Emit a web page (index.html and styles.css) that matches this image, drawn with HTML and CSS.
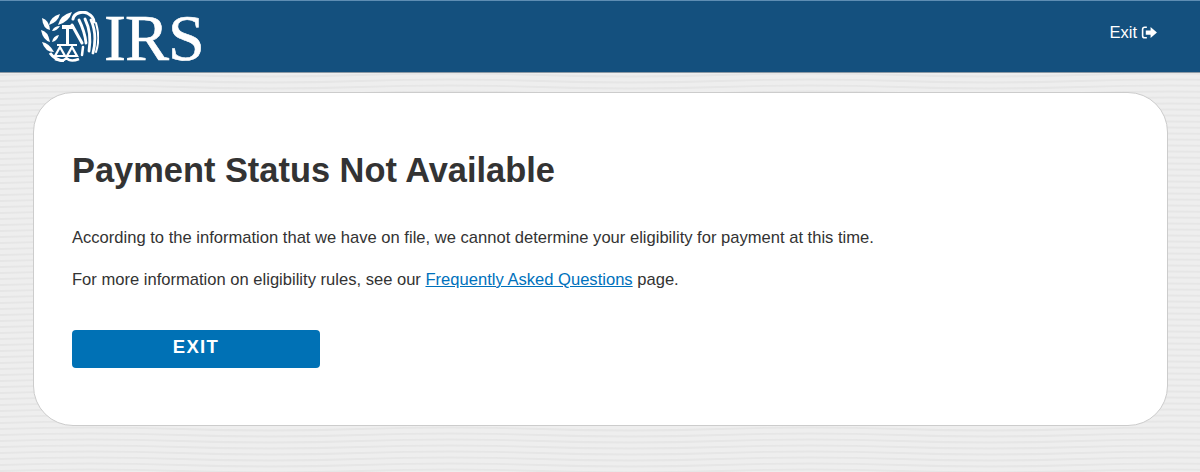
FILE: index.html
```html
<!DOCTYPE html>
<html lang="en">
<head>
  <meta charset="UTF-8" />
  <meta name="viewport" content="width=device-width, initial-scale=1.0" />
  <title>Payment Status Not Available</title>
  <link rel="stylesheet" href="styles.css">
</head>
<body>
  <header class="topbar">
    <a class="logo" href="#">
      <svg class="seal" viewBox="0 0 58 51" aria-hidden="true">
        <!-- laurel -->
        <g fill="#fff">
          <path d="M17 14Q19 4 31 1Q28 11 17 14Z"/>
          <path d="M8 14Q9 6 19 3Q17 11 8 14Z"/>
          <path d="M1 7Q8 9 9 19Q2 18 1 7Z"/>
          <path d="M11 20Q16 20 19 15Q13 15 11 20Z"/>
          <path d="M0 19Q7 20 9 31Q2 29 0 19Z"/>
          <path d="M11 31Q16 30 18 24Q12 25 11 31Z"/>
          <path d="M1 31Q8 32 13 41Q4 41 1 31Z"/>
        </g>
        <path d="M9 42Q14 49 23 50" fill="none" stroke="#fff" stroke-width="3"/>
        <!-- scales -->
        <g fill="none" stroke="#fff">
          <path d="M21 16H33" stroke-width="4"/>
          <path d="M26.500 18V35" stroke-width="3"/>
          <path d="M19 36L14 45H24Z" stroke-width="2.200"/>
          <path d="M31 36L26 45H36Z" stroke-width="2.200"/>
          <path d="M14 48C19 50 23 50 25.500 47C28 50 33 50 38 48" stroke-width="2.500"/>
          <path d="M16 34H36" stroke-width="2"/>
        </g>
        <!-- eagle -->
        <g fill="none" stroke="#fff" stroke-linecap="round">
          <path d="M32 8C33 2 41 0 46 2C50 4 53 7 53 11" stroke-width="3"/>
          <path d="M31 14L41 32" stroke-width="3"/>
          <path d="M38 9C41 15 44 22 45 32" stroke-width="2.800"/>
          <path d="M44 8C48 16 50 28 48 40" stroke-width="2.800"/>
          <path d="M50 9C54 18 55 30 52 42" stroke-width="2.800"/>
          <path d="M55 12C58 22 58 32 55 41" stroke-width="2"/>
          <path d="M42 36L41 44" stroke-width="2.500"/>
        </g>
      </svg>
      <span class="wordmark">IRS</span>
    </a>
    <a class="exit-link" href="#">Exit
      <svg viewBox="0 0 16 14" width="17" height="15" aria-hidden="true">
        <path d="M5.500 2H3.500C2.400 2 1.500 2.900 1.500 4V10C1.500 11.100 2.400 12 3.500 12H5.500" fill="none" stroke="#fff" stroke-width="1.500"/>
        <path d="M4.500 5H9V1.800L15 7L9 12.200V9H4.500Z" fill="#fff"/>
      </svg>
    </a>
  </header>

  <main class="card">
    <h1>Payment Status Not Available</h1>
    <p>According to the information that we have on file, we cannot determine your eligibility for payment at this time.</p>
    <p>For more information on eligibility rules, see our <a href="#">Frequently Asked Questions</a> page.</p>
    <button class="exit-btn">EXIT</button>
  </main>
</body>
</html>
```

FILE: styles.css
```css
html, body {
  height: 100%;
}
body {
  margin: 0;
  font-family: "Liberation Sans", Arial, sans-serif;
  color: #333;
  overflow: hidden;
  background-color: #eeeeee;
  background-image: url("data:image/svg+xml,%3Csvg xmlns='http://www.w3.org/2000/svg' width='360' height='6'%3E%3Cpath d='M0 3C60 1 120 1 180 3S300 5 360 3' fill='none' stroke='%23e6e6e6' stroke-width='2'/%3E%3C/svg%3E");
}
.topbar {
  height: 71px;
  background: #14507e;
  border-top: 1px solid #5e8db3;
  border-bottom: 1px solid #8d9aa5;
  display: flex;
  justify-content: space-between;
  align-items: center;
  padding: 0 42px 0 41px;
}
.logo {
  display: flex;
  align-items: center;
  gap: 5px;
  color: #fff;
  text-decoration: none;
}
.wordmark {
  font-family: "Liberation Serif", "Times New Roman", serif;
  font-size: 66px;
  line-height: 66px;
  letter-spacing: -1px;
  padding-right: 1px;
  margin-top: 2px;
  -webkit-text-stroke: 0.6px #fff;
}
.seal {
  width: 58px;
  height: 51px;
}
.exit-link {
  display: flex;
  align-items: center;
  gap: 4px;
  color: #fff;
  font-size: 16.500px;
  text-decoration: none;
  margin-bottom: 8px;
}
.card {
  margin: 19px 32px 0 33px;
  padding: 57px 38px 0 38px;
  height: 275px;
  background: #fff;
  border: 1px solid #ccc;
  border-radius: 40px;
}
.card h1 {
  margin: 0 0 39px;
  font-size: 34.400px;
  line-height: 40px;
  font-weight: bold;
  color: #333;
}
.card p {
  margin: 0 0 24px;
  font-size: 16.570px;
  line-height: 18px;
}
.card a {
  color: #0071bc;
}
.exit-btn {
  display: block;
  width: 248px;
  height: 38px;
  margin-top: 41px;
  padding: 0 0 4px;
  background: #0071b5;
  color: #fff;
  border: none;
  border-radius: 4px;
  font-family: inherit;
  font-size: 18.500px;
  font-weight: bold;
  letter-spacing: 1.300px;
}
```
